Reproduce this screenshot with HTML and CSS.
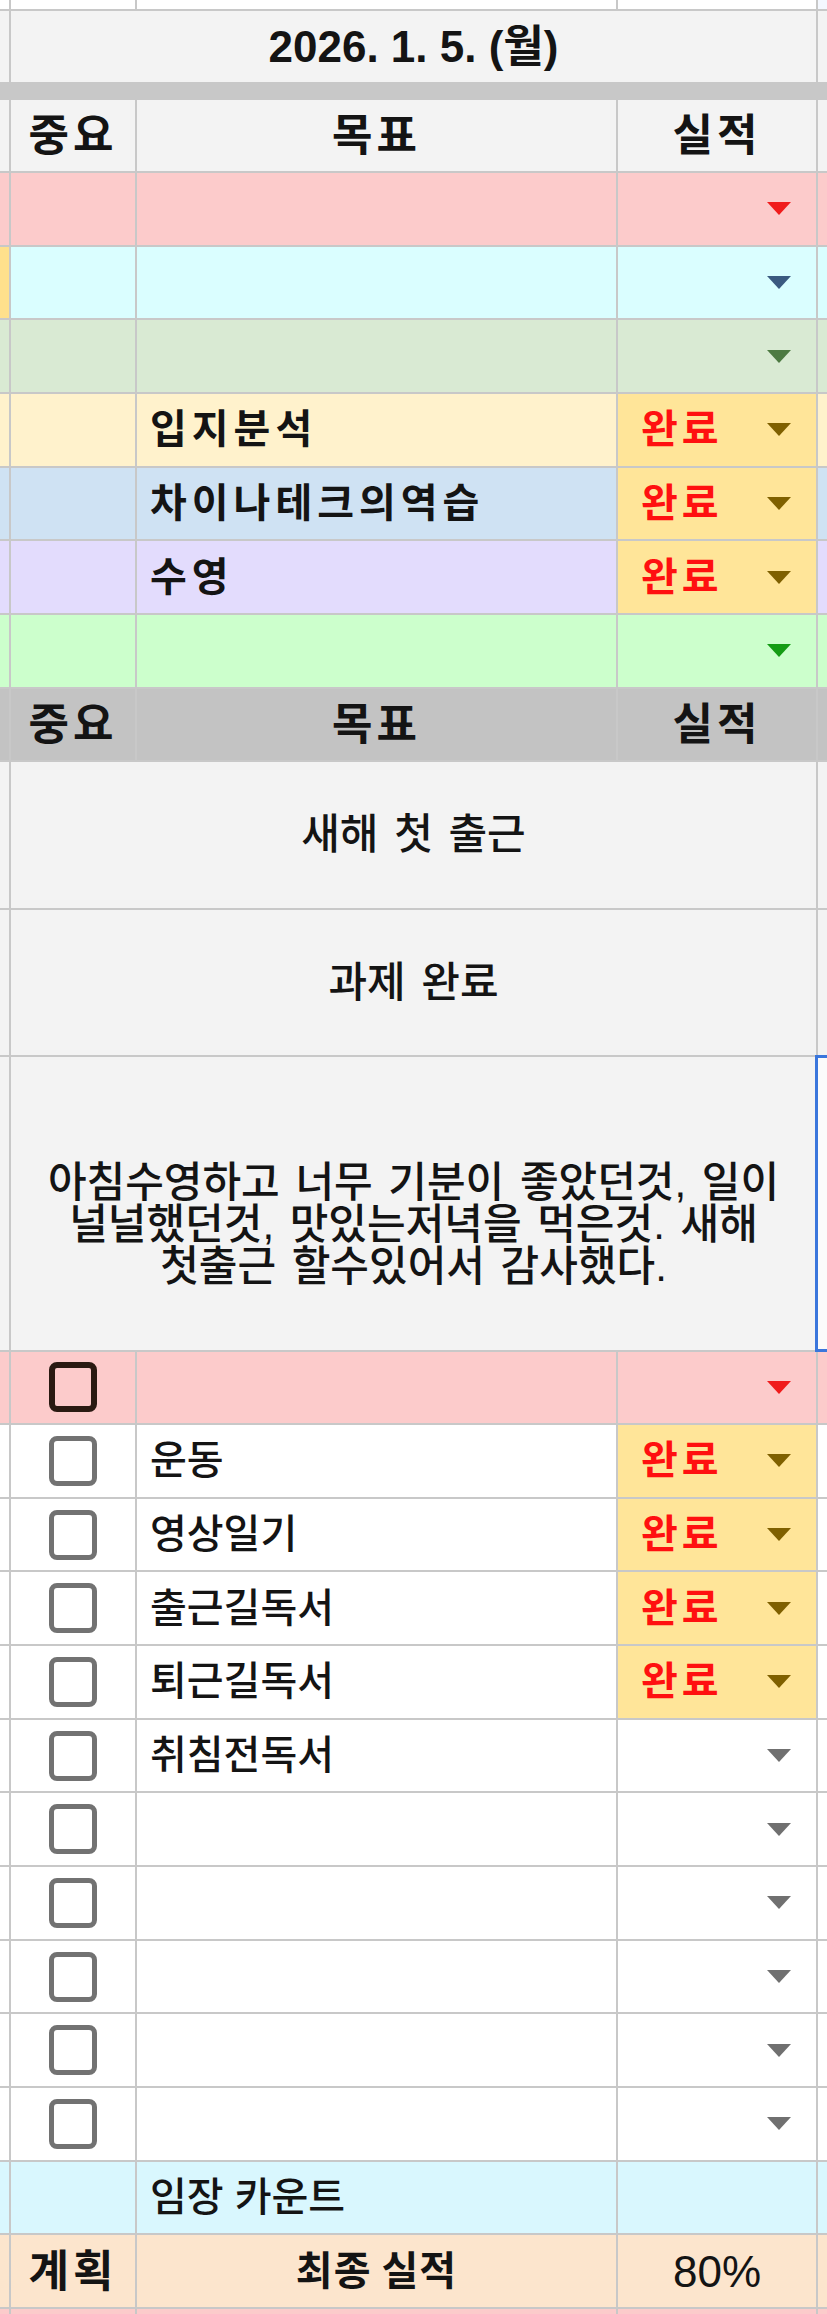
FILE: index.html
```html
<!DOCTYPE html>
<html lang="ko">
<head>
<meta charset="utf-8">
<title>2026. 1. 5.</title>
<link rel="stylesheet" href="styles.css">
</head>
<body>
<div class="sheet">
  <div class="row white"><div class="c"></div><div class="c"></div><div class="c"></div><div class="c"></div><div class="c tr"></div></div>

  <div class="row g1"><div class="c"></div><div class="c m3 date">2026. 1. 5. (월)</div><div class="c"></div></div>

  <div class="band"></div>

  <div class="row g1"><div class="c"></div><div class="c hd">중요</div><div class="c hd">목표</div><div class="c hd">실적</div><div class="c"></div></div>

  <div class="row pink"><div class="c"></div><div class="c"></div><div class="c"></div><div class="c st"><span class="dd"></span></div><div class="c"></div></div>
  <div class="row cyan"><div class="c ls"></div><div class="c"></div><div class="c"></div><div class="c st"><span class="dd"></span></div><div class="c"></div></div>
  <div class="row green"><div class="c"></div><div class="c"></div><div class="c"></div><div class="c st"><span class="dd"></span></div><div class="c"></div></div>
  <div class="row yel"><div class="c"></div><div class="c"></div><div class="c txt b">입지분석</div><div class="c st chip"><span class="done">완료</span><span class="dd"></span></div><div class="c"></div></div>
  <div class="row blue"><div class="c"></div><div class="c"></div><div class="c txt b">차이나테크의역습</div><div class="c st chip"><span class="done">완료</span><span class="dd"></span></div><div class="c"></div></div>
  <div class="row purp"><div class="c"></div><div class="c"></div><div class="c txt b">수영</div><div class="c st chip"><span class="done">완료</span><span class="dd"></span></div><div class="c"></div></div>
  <div class="row lg"><div class="c"></div><div class="c"></div><div class="c"></div><div class="c st"><span class="dd"></span></div><div class="c"></div></div>

  <div class="row g2"><div class="c"></div><div class="c hd">중요</div><div class="c hd">목표</div><div class="c hd">실적</div><div class="c"></div></div>

  <div class="row g1"><div class="c t2"></div><div class="c m3 t2 merged">새해 첫 출근</div><div class="c t2"></div></div>
  <div class="row g1"><div class="c t2"></div><div class="c m3 t2 merged">과제 완료</div><div class="c t2"></div></div>
  <div class="row g1"><div class="c t4"></div><div class="c m3 t4 merged long">아침수영하고 너무 기분이 좋았던것, 일이<br>널널했던것, 맛있는저녁을 먹은것. 새해<br>첫출근 할수있어서 감사했다.</div><div class="c t4 sel"></div></div>

  <div class="row pink"><div class="c"></div><div class="c ctr"><span class="cb dark"></span></div><div class="c"></div><div class="c st"><span class="dd"></span></div><div class="c"></div></div>
  <div class="row white"><div class="c"></div><div class="c ctr"><span class="cb"></span></div><div class="c txt">운동</div><div class="c st chip"><span class="done">완료</span><span class="dd"></span></div><div class="c"></div></div>
  <div class="row white"><div class="c"></div><div class="c ctr"><span class="cb"></span></div><div class="c txt">영상일기</div><div class="c st chip"><span class="done">완료</span><span class="dd"></span></div><div class="c"></div></div>
  <div class="row white"><div class="c"></div><div class="c ctr"><span class="cb"></span></div><div class="c txt">출근길독서</div><div class="c st chip"><span class="done">완료</span><span class="dd"></span></div><div class="c"></div></div>
  <div class="row white"><div class="c"></div><div class="c ctr"><span class="cb"></span></div><div class="c txt">퇴근길독서</div><div class="c st chip"><span class="done">완료</span><span class="dd"></span></div><div class="c"></div></div>
  <div class="row white"><div class="c"></div><div class="c ctr"><span class="cb"></span></div><div class="c txt">취침전독서</div><div class="c st"><span class="dd"></span></div><div class="c"></div></div>
  <div class="row white"><div class="c"></div><div class="c ctr"><span class="cb"></span></div><div class="c"></div><div class="c st"><span class="dd"></span></div><div class="c"></div></div>
  <div class="row white"><div class="c"></div><div class="c ctr"><span class="cb"></span></div><div class="c"></div><div class="c st"><span class="dd"></span></div><div class="c"></div></div>
  <div class="row white"><div class="c"></div><div class="c ctr"><span class="cb"></span></div><div class="c"></div><div class="c st"><span class="dd"></span></div><div class="c"></div></div>
  <div class="row white"><div class="c"></div><div class="c ctr"><span class="cb"></span></div><div class="c"></div><div class="c st"><span class="dd"></span></div><div class="c"></div></div>
  <div class="row white"><div class="c"></div><div class="c ctr"><span class="cb"></span></div><div class="c"></div><div class="c st"><span class="dd"></span></div><div class="c"></div></div>

  <div class="row sky"><div class="c"></div><div class="c"></div><div class="c txt">임장 카운트</div><div class="c"></div><div class="c"></div></div>
  <div class="row peach"><div class="c"></div><div class="c hd">계획</div><div class="c hd final">최종 실적</div><div class="c ctr pct">80%</div><div class="c"></div></div>
  <div class="row pink"><div class="c"></div><div class="c"></div><div class="c"></div><div class="c"></div><div class="c"></div></div>
</div>
</body>
</html>
```

FILE: styles.css
```css
html, body {
  margin: 0;
  padding: 0;
  background: #ffffff;
}

body {
  font-family: "Liberation Sans", "Noto Sans CJK KR", sans-serif;
  color: #141414;
}

.sheet {
  display: grid;
  grid-template-columns: 9px 124px 479px 198px 9px;
  grid-template-rows: 9px 71px 14px 71px;
  grid-auto-rows: 71.66px;
  gap: 2px;
  background: #c8c8c8;
  width: 827px;
  height: 2314px;
  overflow: hidden;
}

.row { display: contents; }

.c {
  display: flex;
  align-items: center;
  font-size: 40px;
  font-weight: 500;
  line-height: 41px;
  min-width: 0;
  position: relative;
  white-space: nowrap;
}

.band {
  grid-column: 1 / -1;
  background: #c8c8c8;
}

.m3 {
  grid-column: span 3;
  justify-content: center;
  text-align: center;
}

.t2 { grid-row: span 2; }
.t4 { grid-row: span 4; }

.ctr { justify-content: center; }

.b {
  font-weight: 700;
  letter-spacing: 5px;
}

.hd {
  font-size: 44px;
  font-weight: 700;
  letter-spacing: 4px;
  justify-content: center;
}

.hd.final {
  font-size: 40px;
  letter-spacing: 1px;
  word-spacing: -2px;
}

.date {
  font-size: 44px;
  font-weight: 700;
}

.merged {
  font-size: 42px;
  word-spacing: 4px;
}

.txt { padding-left: 13px; }

.st {
  padding: 0 25px 0 23px;
}

.dd {
  width: 0;
  height: 0;
  border-left: 12px solid transparent;
  border-right: 12px solid transparent;
  border-top: 13px solid #707070;
  margin-left: auto;
}

.done {
  color: #ff1010;
  font-weight: 700;
  letter-spacing: 4px;
}

.cb {
  box-sizing: border-box;
  width: 48px;
  height: 50px;
  border: 5px solid #727272;
  border-radius: 8px;
}

.cb.dark {
  border: 6px solid #2a1a12;
}

.long {
  line-height: 42px;
  padding-top: 44px;
  box-sizing: border-box;
  white-space: normal;
}

.pct {
  font-size: 44px;
  font-weight: 400;
}

/* row colours */
.white > div { background: #ffffff; }
.g1 > div { background: #f3f3f3; }
.g2 > div { background: #c3c3c3; }
.pink > div { background: #fccbcb; }
.cyan > div { background: #dafeff; }
.cyan > .ls { background: #ffe08c; }
.green > div { background: #d9ead3; }
.yel > div { background: #fff2cc; }
.blue > div { background: #cfe2f3; }
.purp > div { background: #e3dcfd; }
.lg > div { background: #ccffcc; }
.sky > div { background: #d9f7fe; }
.peach > div { background: #fce5cd; }

.row > .chip { background: #ffe599; }
.row > .sel { background: #fbfbfb; }
.row > .tr { background: #f4f8ff; }

.sel::after {
  content: "";
  position: absolute;
  left: -3px;
  top: -2px;
  bottom: -2px;
  right: -6px;
  border: 3px solid #3a76dc;
  border-right: none;
}

/* dropdown arrow colours */
.pink .dd { border-top-color: #f01c1c; }
.cyan .dd { border-top-color: #3a5a80; }
.green .dd { border-top-color: #4d7a42; }
.lg .dd { border-top-color: #149c14; }
.chip .dd { border-top-color: #7f6000; }
```
